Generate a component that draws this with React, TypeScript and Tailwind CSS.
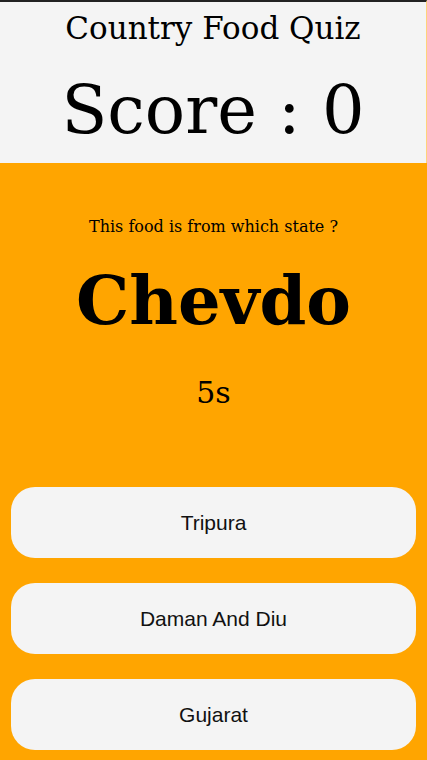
const options = ["Tripura", "Daman And Diu", "Gujarat"];

export default function App() {
  return (
    <div className="min-h-[760px] w-full bg-[#ffa500] flex flex-col font-['DejaVu_Serif',serif] text-black">
      <header className="border-t-2 border-[#222222] bg-[#f4f4f4] border-r border-r-[#ffd27a] h-[163px] flex flex-col items-center">
        <h1 className="text-[31px] leading-[52px]">Country Food Quiz</h1>
        <div className="mt-[4px] text-[67px] leading-[105px]">Score : 0</div>
      </header>

      <main className="flex flex-col items-center">
        <p className="mt-[52px] text-[16px] leading-6">This food is from which state ?</p>
        <h2 className="mt-[14px] text-[67px] leading-[96px] font-bold">Chevdo</h2>
        <div className="mt-[24px] text-[30px] leading-[40px]">5s</div>

        <div className="mt-[74px] w-full px-[11px] flex flex-col gap-[25px]">
          {options.map((o) => (
            <button
              key={o}
              className="h-[71px] w-full rounded-[24px] bg-[#f4f4f4] text-[21px] text-[#111111] font-['Liberation_Sans',Arial,sans-serif]"
            >
              {o}
            </button>
          ))}
        </div>
      </main>
    </div>
  );
}
